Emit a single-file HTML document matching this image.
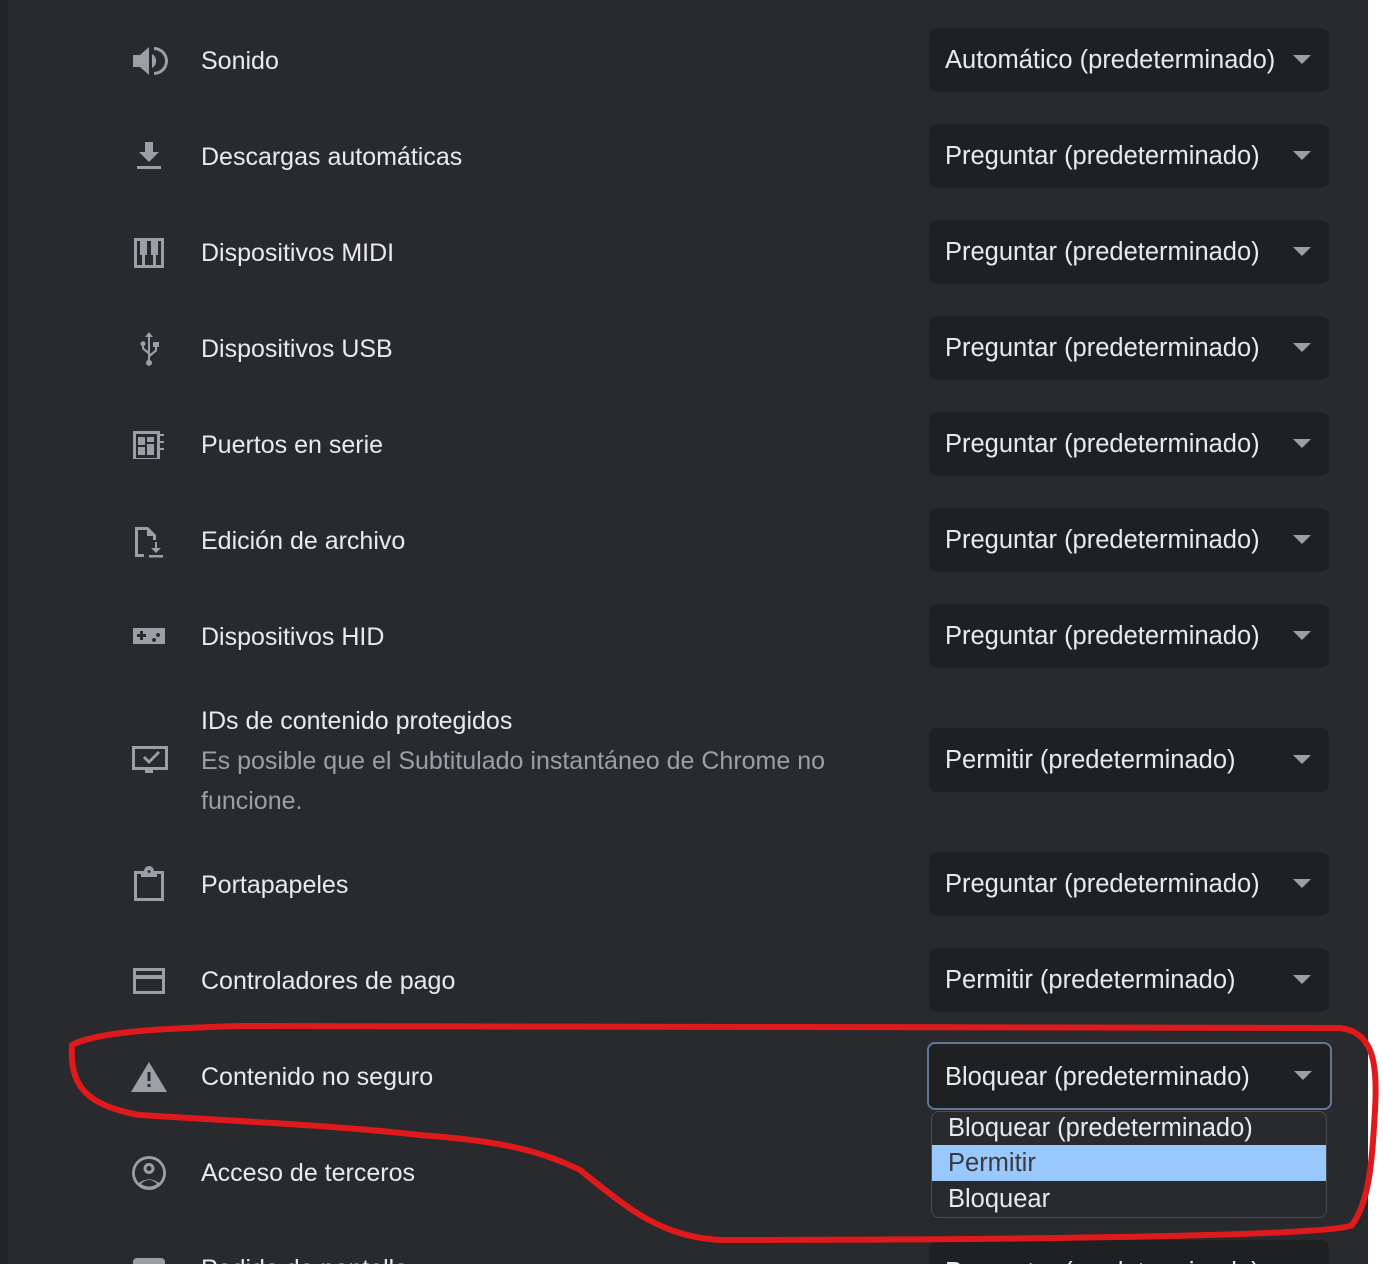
<!DOCTYPE html>
<html><head><meta charset="utf-8"><style>
*{margin:0;padding:0;box-sizing:border-box}
html,body{width:1383px;height:1264px;overflow:hidden}
body{background:#fff;font-family:"Segoe UI","Liberation Sans",sans-serif;position:relative}
#wrap{position:absolute;left:0;top:0;width:1383px;height:1264px;overflow:hidden}
#pg{position:absolute;left:0;top:0;width:1368px;height:1264px;background:#292a2e}
#edge{position:absolute;left:0;top:0;width:8px;height:1264px;background:#232427}
.lab{position:absolute;left:201px;color:#e8eaed;font-size:25px;line-height:30px;white-space:nowrap}
.sec{color:#9aa0a6}
.sel{position:absolute;left:929px;width:400px;height:64px;background:#1f2023;border-radius:8px;color:#e8eaed;font-size:25.5px;line-height:64px;padding-left:16px;white-space:nowrap}
.sel:after{content:"";position:absolute;right:18px;top:27px;border-left:9px solid transparent;border-right:9px solid transparent;border-top:9px solid #9aa0a6}
.ic{position:absolute;left:130px;width:38px;height:38px}
svg.ic *{fill:#9aa0a6}
</style></head><body><div id="wrap">
<div id="pg"></div><div id="edge"></div>

<svg class="ic" style="top:42px" viewBox="0 0 38 38"><path d="M3 13h7l9-8v28l-9-8H3z"/><path d="M22 12a8 8 0 0 1 0 14z"/><path d="M24 5a14 14 0 0 1 0 28v-3a11 11 0 0 0 0-22z"/></svg>
<svg class="ic" style="top:138px" viewBox="0 0 38 38"><path d="M15 4h8v10h6l-10 10-10-10h6z"/><rect x="7" y="28" width="24" height="3"/></svg>
<svg class="ic" style="top:234px" viewBox="0 0 38 38"><path d="M4 4h30v30H4zM7 7v24h5V21h-2V7zm8 14v10h8V21h-2V7h-4v14zm11 0v10h5V7h-3v14z" fill-rule="evenodd"/></svg>
<svg class="ic" style="top:330px" viewBox="0 0 38 38"><path d="M19 2l4 5h-3v17l5-4v-3h-2v-5h6v5h-2v4l-7 6v3a3 3 0 1 1-2 0v-6l-6-5v-3a2.5 2.5 0 1 1 2 0v2l4 3V7h-3z"/></svg>
<svg class="ic" style="top:426px" viewBox="0 0 38 38"><path d="M3 5h27v3h4v2h-4v5h4v2h-4v5h4v2h-4v9H3zm3 3v24h21V8zm2 3h7v8H8zm9 0h7v5h-7zm-9 10h7v8H8zm9-3h7v11h-7z" fill-rule="evenodd"/></svg>
<svg class="ic" style="top:522px" viewBox="0 0 38 38"><path d="M5 5h13l8 8v5h-3v-4h-6V8H8v24h6v3H5z"/><path d="M25 20h2v6h4l-5 5-5-5h4z"/><rect x="19" y="33" width="14" height="2.5"/></svg>
<svg class="ic" style="top:618px" viewBox="0 0 38 38"><path d="M3 10h32v16H3zm4 6v3h3v3h3v-3h3v-3h-3v-3h-3v3zm17 4a2 2 0 1 0 .1 0zm4-5a2 2 0 1 0 .1 0z" fill-rule="evenodd"/></svg>
<svg class="ic" style="top:742px" viewBox="0 0 38 38"><path d="M2 4h36v24H23v3h-8v-3H2zm3 3v18h30V7zm8 9 2-2 4 4 9-9 2 2-11 11z" fill-rule="evenodd"/></svg>
<svg class="ic" style="top:866px" viewBox="0 0 38 38"><path d="M4 5h10a5 5 0 0 1 10 0h10v30H4zm3 3v24h24V8h-4v3H11V8zm12-4a1.5 1.5 0 1 0 .1 0z" fill-rule="evenodd"/></svg>
<svg class="ic" style="top:962px" viewBox="0 0 38 38"><path d="M3 6h32v26H3zm3 3v4h26V9zm0 8v12h26V17z" fill-rule="evenodd"/></svg>
<svg class="ic" style="top:1058px" viewBox="0 0 38 38"><path d="M19 4l18 30H1zm-1.5 10v9h3v-9zm0 12v3h3v-3z" fill-rule="evenodd"/></svg>
<svg class="ic" style="top:1154px" viewBox="0 0 38 38"><path d="M19 2a17 17 0 1 1 0 34 17 17 0 0 1 0-34zm0 3a14 14 0 0 0-10 24 14 12 0 0 1 20 0A14 14 0 0 0 19 5zm0 4a5.5 5.5 0 1 1 0 11 5.5 5.5 0 0 1 0-11zm0 3a2.5 2.5 0 1 0 0 5 2.5 2.5 0 0 0 0-5zm0 14a11 9 0 0 0-8 4 14 14 0 0 0 16 0 11 9 0 0 0-8-4z" fill-rule="evenodd"/></svg>
<div style="position:absolute;left:133px;top:1258px;width:32px;height:10px;background:#9aa0a6;border-radius:4px"></div>

<div class="lab" style="top:46px">Sonido</div>
<div class="lab" style="top:142px">Descargas automáticas</div>
<div class="lab" style="top:238px">Dispositivos MIDI</div>
<div class="lab" style="top:334px">Dispositivos USB</div>
<div class="lab" style="top:430px">Puertos en serie</div>
<div class="lab" style="top:526px">Edición de archivo</div>
<div class="lab" style="top:622px">Dispositivos HID</div>
<div class="lab" style="top:706px">IDs de contenido protegidos</div>
<div class="lab sec" style="top:746px">Es posible que el Subtitulado instantáneo de Chrome no</div>
<div class="lab sec" style="top:786px">funcione.</div>
<div class="lab" style="top:870px">Portapapeles</div>
<div class="lab" style="top:966px">Controladores de pago</div>
<div class="lab" style="top:1062px">Contenido no seguro</div>
<div class="lab" style="top:1158px">Acceso de terceros</div>
<div class="lab" style="top:1254px">Pedido de pantalla</div>

<div class="sel" style="top:28px">Automático (predeterminado)</div>
<div class="sel" style="top:124px">Preguntar (predeterminado)</div>
<div class="sel" style="top:220px">Preguntar (predeterminado)</div>
<div class="sel" style="top:316px">Preguntar (predeterminado)</div>
<div class="sel" style="top:412px">Preguntar (predeterminado)</div>
<div class="sel" style="top:508px">Preguntar (predeterminado)</div>
<div class="sel" style="top:604px">Preguntar (predeterminado)</div>
<div class="sel" style="top:728px">Permitir (predeterminado)</div>
<div class="sel" style="top:852px">Preguntar (predeterminado)</div>
<div class="sel" style="top:948px">Permitir (predeterminado)</div>
<div class="sel" style="top:1042px;left:927px;width:405px;height:68px;line-height:66px;border:2px solid #60779a;padding-left:16px">Bloquear (predeterminado)</div>
<div class="sel" style="top:1240px">Preguntar (predeterminado)</div>

<div style="position:absolute;left:931px;top:1111px;width:396px;height:107px;background:#292a2d;border:1.5px solid #4a4b4f;border-radius:8px;overflow:hidden;font-size:25.5px;color:#e8eaed">
<div style="height:33px;line-height:33px;padding-left:16px">Bloquear (predeterminado)</div>
<div style="height:36px;line-height:36px;padding-left:16px;background:#99c8ff;color:#3a3a3a">Permitir</div>
<div style="height:36px;line-height:36px;padding-left:16px">Bloquear</div>
</div>

<svg style="position:absolute;left:0;top:0" width="1383" height="1264"><path d="M72 1045 C100 1030 180 1028 240 1026 L1340 1028 C1372 1032 1378 1060 1375 1110 C1372 1160 1370 1200 1352 1225 C1330 1238 900 1240 720 1240 C660 1236 630 1210 580 1170 C530 1145 480 1140 420 1135 C330 1125 250 1122 140 1115 C80 1105 70 1080 72 1045 Z" fill="none" stroke="#e01a1c" stroke-width="6"/></svg>
</div></body></html>
